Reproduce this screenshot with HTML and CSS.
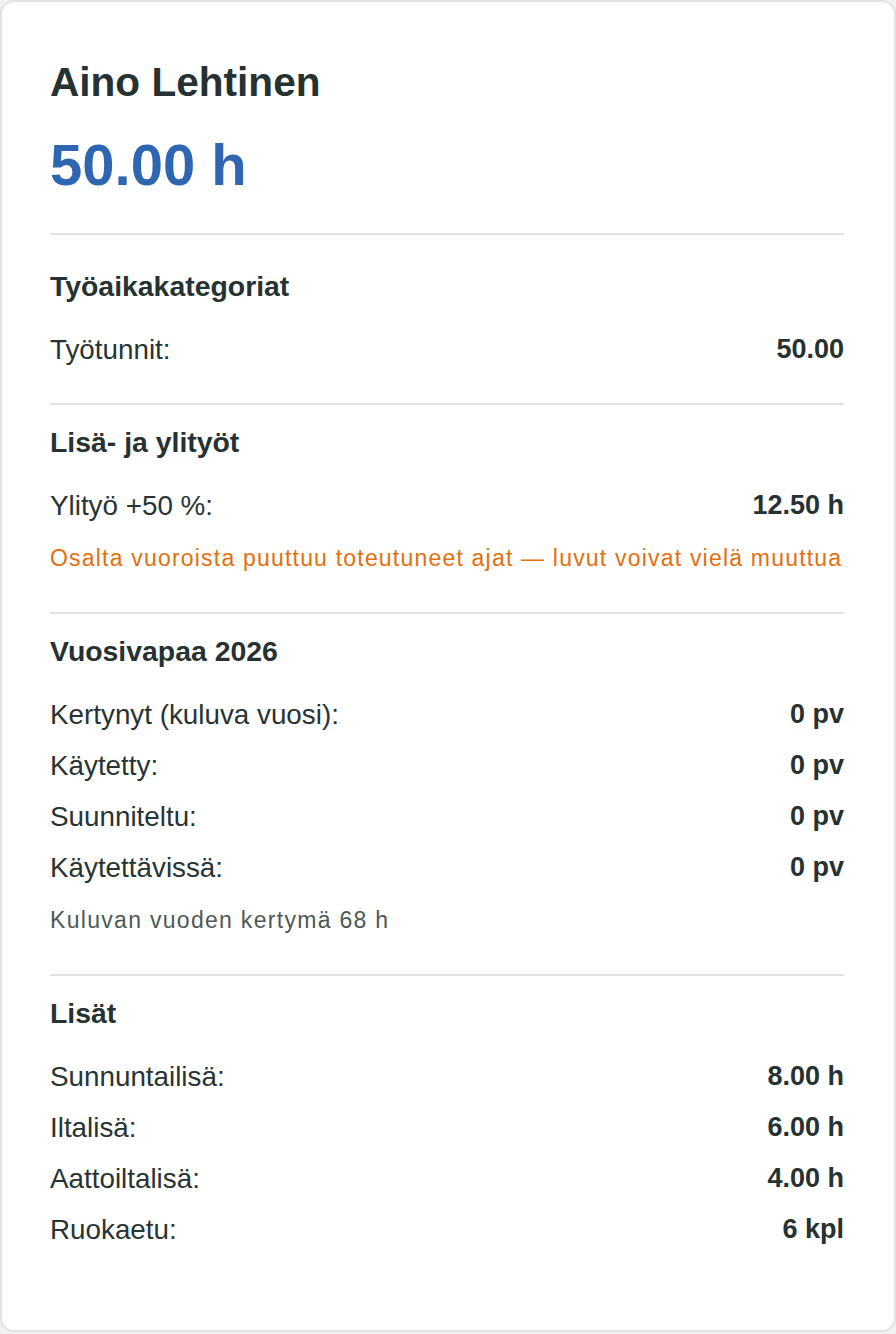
FILE: index.html
```html
<!DOCTYPE html>
<html lang="fi">
<head>
<meta charset="utf-8">
<title>Aino Lehtinen</title>
<link rel="stylesheet" href="styles.css">
</head>
<body>
<div class="card">
  <header class="card-header">
    <h1 class="name">Aino Lehtinen</h1>
    <div class="total">50.00 h</div>
  </header>

  <section class="section section-first">
    <h2 class="section-title">Työaikakategoriat</h2>
    <div class="rows">
      <div class="row"><span class="label">Työtunnit:</span><span class="value">50.00</span></div>
    </div>
  </section>

  <section class="section">
    <h2 class="section-title">Lisä- ja ylityöt</h2>
    <div class="rows">
      <div class="row"><span class="label">Ylityö +50 %:</span><span class="value">12.50 h</span></div>
    </div>
    <p class="warning">Osalta vuoroista puuttuu toteutuneet ajat — luvut voivat vielä muuttua</p>
  </section>

  <section class="section">
    <h2 class="section-title">Vuosivapaa 2026</h2>
    <div class="rows">
      <div class="row"><span class="label">Kertynyt (kuluva vuosi):</span><span class="value">0 pv</span></div>
      <div class="row"><span class="label">Käytetty:</span><span class="value">0 pv</span></div>
      <div class="row"><span class="label">Suunniteltu:</span><span class="value">0 pv</span></div>
      <div class="row"><span class="label">Käytettävissä:</span><span class="value">0 pv</span></div>
    </div>
    <p class="note">Kuluvan vuoden kertymä 68 h</p>
  </section>

  <section class="section section-last">
    <h2 class="section-title">Lisät</h2>
    <div class="rows">
      <div class="row"><span class="label">Sunnuntailisä:</span><span class="value">8.00 h</span></div>
      <div class="row"><span class="label">Iltalisä:</span><span class="value">6.00 h</span></div>
      <div class="row"><span class="label">Aattoiltalisä:</span><span class="value">4.00 h</span></div>
      <div class="row"><span class="label">Ruokaetu:</span><span class="value">6 kpl</span></div>
    </div>
  </section>
</div>
</body>
</html>
```

FILE: styles.css
```css
* { box-sizing: border-box; }

html, body {
  margin: 0;
  padding: 0;
}

body {
  background: #f1f1f1;
  font-family: "Liberation Sans", Arial, sans-serif;
  color: #283434;
}

.card {
  width: 896px;
  height: 1332px;
  background: #ffffff;
  border: 2px solid #e3e3e3;
  border-radius: 14px;
  padding: 56px 50px 0 48px;
}

.card-header {
  padding-bottom: 33px;
  border-bottom: 2px solid #e2e2e2;
}

.name {
  margin: 0;
  font-size: 40.6px;
  line-height: 48px;
  font-weight: 700;
  color: #263232;
}

.total {
  margin-top: 24px;
  font-size: 58px;
  line-height: 70px;
  font-weight: 700;
  color: #2f66b1;
}

.section {
  padding: 21px 0 33px;
  border-bottom: 2px solid #e2e2e2;
}

.section-first {
  padding-top: 35px;
}

.section-last {
  border-bottom: none;
}

.section-title {
  margin: 0;
  font-size: 28.4px;
  line-height: 32px;
  font-weight: 700;
  color: #263232;
}

.rows {
  margin-top: 27px;
  display: flex;
  flex-direction: column;
  gap: 10px;
}

.row {
  display: flex;
  justify-content: space-between;
  align-items: center;
  height: 41px;
}

.label {
  font-size: 27.8px;
  line-height: 41px;
  color: #283434;
}

.value {
  font-size: 27px;
  line-height: 41px;
  font-weight: 700;
  color: #263232;
}

.warning {
  margin: 16px 0 4px;
  font-size: 23px;
  line-height: 33px;
  letter-spacing: 1.2px;
  white-space: nowrap;
  color: #e2700f;
}

.note {
  margin: 16px 0 4px;
  font-size: 23px;
  line-height: 33px;
  letter-spacing: 1.3px;
  color: #4d5858;
}
```
